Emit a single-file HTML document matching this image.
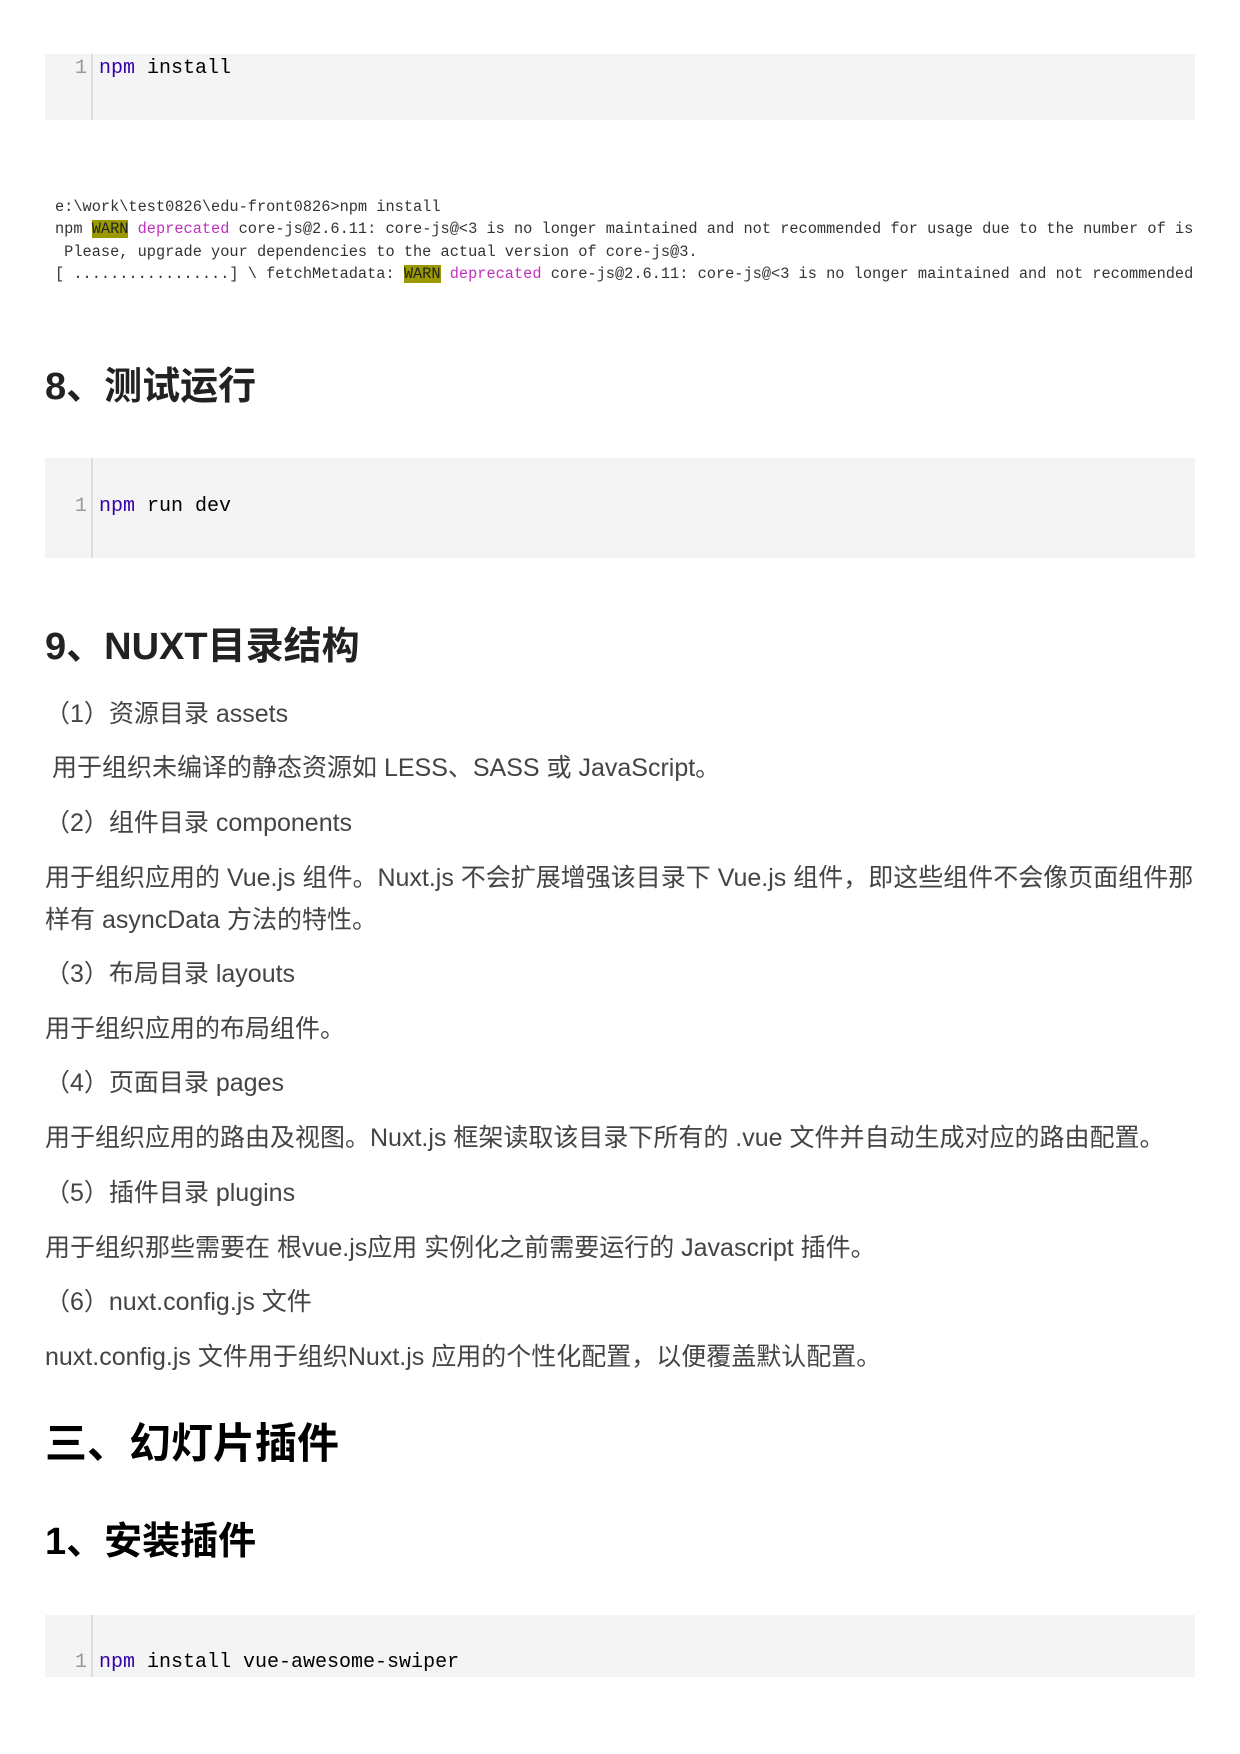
<!DOCTYPE html>
<html><head><meta charset="utf-8"><style>
body{margin:0;background:#fff;width:1240px;height:1754px;position:relative;overflow:hidden;font-family:"Liberation Sans","Noto Sans CJK SC",sans-serif;color:#333}
.code{position:absolute;left:45px;width:1150px;background:#f4f4f4}
.code .g{position:absolute;left:46px;top:0;bottom:0;border-left:2px solid #ddd}
.code .t{position:absolute;font-family:"Liberation Mono",monospace;font-size:20px;color:#000;white-space:nowrap}
.code .n{position:absolute;left:30px;font-family:"Liberation Mono",monospace;font-size:20px;color:#999}
.kw{color:#3300aa}
.term{position:absolute;left:55px;font-family:"Liberation Mono",monospace;font-size:15.3px;color:#333;white-space:pre;line-height:22.3px}
.w{background:#9a9a00;color:#222}
.m{color:#c030c0}
h2{position:absolute;margin:0;left:45px;font-size:38px;font-weight:bold;color:#222;white-space:nowrap;line-height:1}
p{position:absolute;margin:0;left:45px;font-size:25px;color:#444;white-space:nowrap;line-height:1}
</style></head><body>
<div class="code" style="top:54px;height:66px"><div class="g"></div><span class="n" style="top:3px">1</span><span class="t" style="left:54px;top:3px"><span class="kw">npm</span> install</span></div>

<div class="term" style="top:196px">e:\work\test0826\edu-front0826&gt;npm install
npm <span class="w">WARN</span> <span class="m">deprecated</span> core-js@2.6.11: core-js@&lt;3 is no longer maintained and not recommended for usage due to the number of is
 Please, upgrade your dependencies to the actual version of core-js@3.
[ .................] \ fetchMetadata: <span class="w">WARN</span> <span class="m">deprecated</span> core-js@2.6.11: core-js@&lt;3 is no longer maintained and not recommended</div>

<h2 style="top:368px">8、测试运行</h2>
<div class="code" style="top:458px;height:100px"><div class="g"></div><span class="n" style="top:37px">1</span><span class="t" style="left:54px;top:37px"><span class="kw">npm</span> run dev</span></div>

<h2 style="top:628px">9、NUXT目录结构</h2>
<p style="top:702px">（1）资源目录 assets</p>
<p style="top:756px;left:52px">用于组织未编译的静态资源如 LESS、SASS 或 JavaScript。</p>
<p style="top:811px">（2）组件目录 components</p>
<p style="top:866px">用于组织应用的 Vue.js 组件。Nuxt.js 不会扩展增强该目录下 Vue.js 组件，即这些组件不会像页面组件那</p>
<p style="top:908px">样有 asyncData 方法的特性。</p>
<p style="top:962px">（3）布局目录 layouts</p>
<p style="top:1017px">用于组织应用的布局组件。</p>
<p style="top:1071px">（4）页面目录 pages</p>
<p style="top:1126px">用于组织应用的路由及视图。Nuxt.js 框架读取该目录下所有的 .vue 文件并自动生成对应的路由配置。</p>
<p style="top:1181px">（5）插件目录 plugins</p>
<p style="top:1236px">用于组织那些需要在 根vue.js应用 实例化之前需要运行的 Javascript 插件。</p>
<p style="top:1290px">（6）nuxt.config.js 文件</p>
<p style="top:1345px">nuxt.config.js 文件用于组织Nuxt.js 应用的个性化配置，以便覆盖默认配置。</p>

<h2 style="top:1423px;font-size:42px;color:#000">三、幻灯片插件</h2>
<h2 style="top:1523px;color:#000">1、安装插件</h2>
<div class="code" style="top:1615px;height:62px"><div class="g"></div><span class="n" style="top:36px">1</span><span class="t" style="left:54px;top:36px"><span class="kw">npm</span> install vue-awesome-swiper</span></div>
</body></html>
